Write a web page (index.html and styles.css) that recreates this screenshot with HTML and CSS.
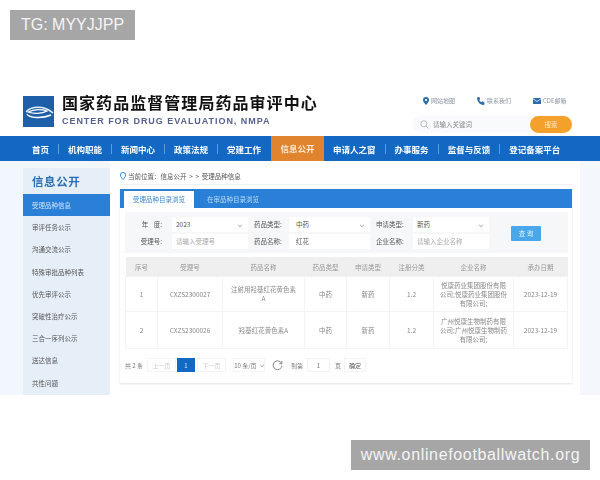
FILE: index.html
```html
<!DOCTYPE html>
<html lang="zh">
<head>
  <meta charset="UTF-8" />
  <title>受理品种信息</title>
  <link rel="stylesheet" href="styles.css">
</head>
<body>
<div class="tag tag-top">TG: MYYJJPP</div>

<div class="shot">
  <header class="header">
    <div class="logo">
      <svg width="31" height="31" viewBox="0 0 31 31">
        <rect width="31" height="31" fill="#1d5fa8"/>
        <path d="M3 16C8 10 21 9 30 17" fill="none" stroke="#e8f1fa" stroke-width="1.4"/>
        <path d="M5 16C11 13 19 13 24 15C19 18 10 18 5 16Z" fill="none" stroke="#fff" stroke-width="1.3"/>
        <path d="M4 18C6 22 19 23 28 19" fill="none" stroke="#fff" stroke-width="1.6"/>
      </svg>
    </div>
    <div class="brand">
      <div class="brand-cn">国家药品监督管理局药品审评中心</div>
      <div class="brand-en">CENTER FOR DRUG EVALUATION, NMPA</div>
    </div>
    <div class="tools">
      <div class="links">
        <span class="link">
          <svg width="6" height="8" viewBox="0 0 6 8"><path d="M3 0a3 3 0 0 1 3 3C6 5 3 8 3 8S0 5 0 3a3 3 0 0 1 3-3Z" fill="#2f6ea8"/><circle cx="3" cy="3" r="1.1" fill="#fff"/></svg>
          网站地图
        </span>
        <span class="link">
          <svg width="8" height="8" viewBox="0 0 8 8"><path d="M1 0l1.6.3.6 2-1 .8c.5 1 1.2 1.7 2.2 2.2l.8-1 2 .6L7.5 7c-.2.6-.8 1-1.5.9C3 7.5.6 5 .1 2 0 1 .4.3 1 0Z" fill="#2f6ea8"/></svg>
          联系我们
        </span>
        <span class="link">
          <svg width="8" height="6" viewBox="0 0 8 6"><rect width="8" height="6" fill="#2f6ea8"/><path d="M0 .8l4 2.7 4-2.7" fill="none" stroke="#fff" stroke-width=".7"/></svg>
          CDE邮箱
        </span>
      </div>
      <div class="search">
        <svg width="9" height="9" viewBox="0 0 9 9"><circle cx="3.8" cy="3.8" r="3" fill="none" stroke="#aaa" stroke-width=".8"/><path d="M6 6l2.5 2.5" stroke="#aaa" stroke-width=".8"/></svg>
        <span class="search-text">请输入关键词</span>
        <span class="search-btn">搜索</span>
      </div>
    </div>
  </header>

  <nav class="nav">
    <a class="nav-item">首页</a>
    <a class="nav-item">机构职能</a>
    <a class="nav-item">新闻中心</a>
    <a class="nav-item">政策法规</a>
    <a class="nav-item plain before-active">党建工作</a>
    <a class="nav-item active">信息公开</a>
    <a class="nav-item">申请人之窗</a>
    <a class="nav-item">办事服务</a>
    <a class="nav-item">监督与反馈</a>
    <a class="nav-item plain">登记备案平台</a>
  </nav>

  <div class="content">
    <aside class="side">
      <h2 class="side-title">信息公开</h2>
      <a class="side-item current">受理品种信息</a>
      <a class="side-item">审评任务公示</a>
      <a class="side-item">沟通交流公示</a>
      <a class="side-item">特殊审批品种列表</a>
      <a class="side-item">优先审评公示</a>
      <a class="side-item">突破性治疗公示</a>
      <a class="side-item">三合一序列公示</a>
      <a class="side-item">送达信息</a>
      <a class="side-item">共性问题</a>
    </aside>

    <main class="main">
      <div class="crumb">
        <svg width="6" height="8" viewBox="0 0 6 8"><path d="M3 .4A2.6 2.6 0 0 1 5.6 3C5.6 4.8 3 7.6 3 7.6S.4 4.8.4 3A2.6 2.6 0 0 1 3 .4Z" fill="none" stroke="#2a7fd6" stroke-width=".9"/></svg>
        <span>当前位置：信息公开 &gt; &gt; 受理品种信息</span>
      </div>

      <div class="card">
        <div class="tabs">
          <span class="tab on">受理品种目录浏览</span>
          <span class="tab">在审品种目录浏览</span>
        </div>

        <div class="filter">
          <div class="filter-grid">
            <label class="lbl first wide">年 度:</label>
            <div class="field">2023<i class="caret"></i></div>
            <label class="lbl">药品类型:</label>
            <div class="field mid">中药<i class="caret"></i></div>
            <label class="lbl">申请类型:</label>
            <div class="field">新药<i class="caret"></i></div>

            <label class="lbl first">受理号:</label>
            <div class="field hint">请输入受理号</div>
            <label class="lbl">药品名称:</label>
            <div class="field mid">红花</div>
            <label class="lbl">企业名称:</label>
            <div class="field hint">请输入企业名称</div>
          </div>
          <button class="query">查 询</button>
        </div>

        <table class="list">
          <colgroup>
            <col class="c1"><col class="c2"><col class="c3"><col class="c4">
            <col class="c5"><col class="c6"><col class="c7"><col class="c8">
          </colgroup>
          <thead>
            <tr>
              <th>序号</th><th>受理号</th><th>药品名称</th><th>药品类型</th>
              <th>申请类型</th><th>注册分类</th><th>企业名称</th><th>承办日期</th>
            </tr>
          </thead>
          <tbody>
            <tr class="r1">
              <td>1</td><td>CXZS2300027</td><td class="name">注射用羟基红花黄色素A</td><td>中药</td>
              <td>新药</td><td>1.2</td><td>悦康药业集团股份有限公司;悦康药业集团股份有限公司;</td><td>2023-12-19</td>
            </tr>
            <tr class="r2">
              <td>2</td><td>CXZS2300026</td><td class="name">羟基红花黄色素A</td><td>中药</td>
              <td>新药</td><td>1.2</td><td>广州悦康生物制药有限公司;广州悦康生物制药有限公司;</td><td>2023-12-19</td>
            </tr>
          </tbody>
        </table>

        <div class="pager">
          <span class="total">共 2 条</span>
          <span class="pg">上一页</span>
          <span class="pg cur">1</span>
          <span class="pg">下一页</span>
          <span class="size">10 条/页 <i class="caret small"></i></span>
          <svg class="refresh" width="11" height="11" viewBox="0 0 10 10"><path d="M8.6 3A4 4 0 1 0 9 5" fill="none" stroke="#777" stroke-width=".8"/><path d="M9 .8V3.4H6.5" fill="none" stroke="#777" stroke-width=".8"/></svg>
          <span>到第</span>
          <span class="page-input">1</span>
          <span>页</span>
          <span class="ok">确定</span>
        </div>
      </div>
    </main>
  </div>
</div>

<div class="tag tag-bottom">www.onlinefootballwatch.org</div>
</body>
</html>
```

FILE: styles.css
```css
body {
  margin: 0;
  background: #fff;
  font-family: "Noto Sans CJK SC", "Liberation Sans", sans-serif;
  color: #666;
}

.tag {
  position: absolute;
  background: #a6a6a6;
  color: #f4f4f4;
  font-family: "Liberation Sans", sans-serif;
  display: flex;
  align-items: center;
  justify-content: center;
  height: 30px;
}

.tag-top {
  left: 10px;
  top: 10px;
  width: 125px;
  font-size: 16px;
}

.tag-bottom {
  left: 351px;
  top: 440px;
  width: 239px;
  font-size: 16px;
  letter-spacing: 0.65px;
}

.shot {
  position: absolute;
  left: 0;
  top: 80px;
  width: 600px;
  height: 315px;
  overflow: hidden;
  filter: blur(0.35px);
}

/* header */
.header {
  height: 56px;
  display: flex;
  padding: 16px 28px 0 23px;
  box-sizing: border-box;
}

.logo {
  width: 31px;
  height: 31px;
  margin-right: 8px;
}

.brand-cn {
  margin-top: -2px;
  font-size: 16px;
  font-weight: 700;
  line-height: 16px;
  letter-spacing: 1.05px;
  color: #111;
  white-space: nowrap;
}

.brand-en {
  margin-top: 6px;
  font-family: "Liberation Sans", sans-serif;
  font-size: 9px;
  font-weight: bold;
  line-height: 10px;
  letter-spacing: 0.95px;
  color: #56618f;
  white-space: nowrap;
}

.tools {
  margin-left: auto;
  width: 160px;
}

.links {
  display: flex;
  height: 9px;
  padding-left: 11px;
  gap: 22px;
  font-size: 6px;
  line-height: 9px;
  color: #8a93a0;
  white-space: nowrap;
}

.link {
  display: flex;
  align-items: center;
  gap: 2px;
}

.search {
  margin-top: 10px;
  height: 18px;
  display: flex;
  align-items: center;
  background: #f9fafb;
  border-radius: 9px;
  padding-left: 8px;
  font-size: 6.5px;
  color: #888;
}

.search-text {
  margin-left: 4px;
}

.search-btn {
  margin-left: auto;
  width: 42px;
  height: 17px;
  line-height: 17px;
  text-align: center;
  background: #f4a12c;
  border-radius: 9px;
  color: #fde9c8;
}

/* nav */
.nav {
  height: 25px;
  display: flex;
  align-items: center;
  padding-left: 23px;
  background: #1268c3;
  color: #fff;
  font-size: 8.5px;
  font-weight: bold;
}

.nav-item {
  padding: 0 9px;
  height: 10px;
  line-height: 10px;
  border-right: 1px solid #5c9ddd;
  white-space: nowrap;
}

.nav-item.plain {
  border-right: 0;
}

.nav-item.before-active {
  margin-right: 1px;
}

.nav-item.active {
  height: 25px;
  line-height: 25px;
  padding: 0 9.5px;
  background: #e0852e;
  color: #fbe9d6;
  border-right: 0;
}

/* body */
.content {
  height: 234px;
  display: flex;
  padding: 0 20px 0 23px;
  background: linear-gradient(90deg, #f1f7fc, #f4f8fc);
}

.side {
  width: 87px;
  margin-top: 7px;
  background: #e6eff8;
}

.side-title {
  margin: 0;
  height: 20px;
  padding: 6px 0 0 9px;
  font-size: 11.5px;
  line-height: 15px;
  letter-spacing: 0.6px;
  font-weight: bold;
  color: #2c6fb3;
}

.side-item {
  display: block;
  height: 22.2px;
  line-height: 22.2px;
  padding-left: 9px;
  font-size: 6.5px;
  color: #555;
  white-space: nowrap;
}

.side-item.current {
  background: #2a7fd6;
  color: #cfe4f8;
}

.main {
  flex: 1;
  background: #fff;
  padding: 7px 8px 0 10px;
  min-width: 0;
}

.crumb {
  display: flex;
  align-items: center;
  gap: 2px;
  height: 17px;
  font-size: 6.5px;
  word-spacing: 1.2px;
  color: #555;
  white-space: nowrap;
  border-bottom: 1px solid #eef1f4;
  margin-bottom: 4px;
  box-sizing: border-box;
}

.card {
  height: 194px;
  box-shadow: 0 1px 2px #dfe3e8;
}

.tabs {
  height: 19px;
  display: flex;
  align-items: flex-end;
  padding-left: 4px;
  background: #2a7fd6;
  font-size: 6.5px;
  color: #b9dcf8;
}

.tab {
  width: 70px;
  height: 17px;
  line-height: 17px;
  text-align: center;
  margin-right: 4px;
  white-space: nowrap;
}

.tab.on {
  background: #fff;
  color: #3b87cf;
}

.filter {
  margin: 4px 4px 0 5px;
  height: 41px;
  padding-top: 1px;
  box-sizing: border-box;
  background: #f6f7f8;
  display: flex;
  align-items: center;
}

.filter-grid {
  display: grid;
  grid-template-columns: 47px 76px 41px 81px 43px 76px;
  grid-template-rows: 15px 15px;
  row-gap: 2px;
  font-size: 6.5px;
}

.lbl {
  line-height: 15px;
  color: #555;
  padding-left: 6px;
  white-space: nowrap;
}

.lbl.first {
  padding: 0 10px 0 0;
  text-align: right;
}

.lbl.wide {
  word-spacing: 4px;
}

.field {
  position: relative;
  background: #fff;
  line-height: 15px;
  padding-left: 4px;
  color: #555;
  white-space: nowrap;
}

.field.mid {
  padding-left: 7px;
}

.field.hint {
  color: #aaa;
}

.caret {
  position: absolute;
  right: 6px;
  top: 6px;
  width: 3px;
  height: 3px;
  border-right: 1px solid #aaa;
  border-bottom: 1px solid #aaa;
  transform: rotate(45deg) scale(0.8);
}

.caret.small {
  position: static;
  display: inline-block;
  margin: 0 0 1px 2px;
}

.query {
  margin-left: 22px;
  width: 30px;
  height: 15px;
  padding: 0;
  border: 0;
  border-radius: 1px;
  background: #4aa8ea;
  color: #d8effd;
  font-family: inherit;
  font-size: 6.5px;
}

.list {
  margin: 4px 5px 0 5px;
  width: 442px;
  table-layout: fixed;
  border-collapse: collapse;
  font-size: 6.5px;
  color: #888;
  text-align: center;
}

.c1 { width: 32px; }
.c2 { width: 65px; }
.c3 { width: 82px; }
.c4 { width: 42px; }
.c5 { width: 43px; }
.c6 { width: 44px; }
.c7 { width: 80px; }
.c8 { width: 54px; }

.list th {
  height: 19px;
  padding: 0;
  background: #efefef;
  font-weight: normal;
  color: #999;
}

.list td {
  padding: 0 6px;
  border: 1px solid #f4f4f4;
  line-height: 9px;
}

.list td.name {
  padding: 0 8px;
}

.r1 td { height: 35px; box-sizing: border-box; }
.r2 td { height: 37px; box-sizing: border-box; }

.pager {
  margin: 9px 0 0 5px;
  height: 14px;
  display: flex;
  align-items: center;
  font-size: 6px;
  color: #777;
  white-space: nowrap;
}

.total {
  width: 22px;
}

.pg {
  width: 29px;
  height: 14px;
  line-height: 14px;
  text-align: center;
  margin-right: 1px;
  border: 1px solid #f4f4f4;
  box-sizing: border-box;
  color: #ccc;
}

.pg.cur {
  width: 18px;
  margin-right: 2px;
  background: #1268c3;
  border-color: #1268c3;
  color: #cfe4f8;
}

.size {
  margin-left: 6px;
  width: 32px;
  height: 14px;
  line-height: 14px;
  border: 1px solid #f4f4f4;
  box-sizing: border-box;
  text-align: center;
}

.refresh {
  margin: 0 8px 0 7px;
}

.page-input {
  width: 23px;
  height: 14px;
  line-height: 14px;
  margin: 0 5px 0 4px;
  border: 1px solid #f2f2f2;
  box-sizing: border-box;
  text-align: center;
}

.ok {
  margin-left: 3px;
  width: 22px;
  height: 14px;
  line-height: 14px;
  border: 1px solid #f2f2f2;
  box-sizing: border-box;
  text-align: center;
  color: #555;
}
```
